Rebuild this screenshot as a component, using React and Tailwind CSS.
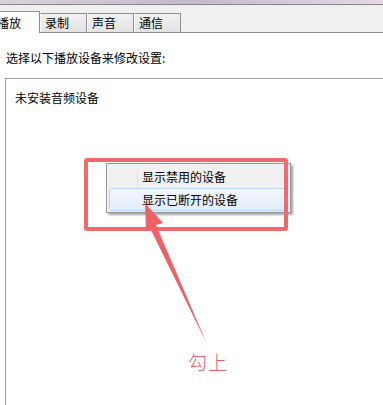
import React from 'react';

const tabs = ['录制', '声音', '通信'];

const menuItems = [
  { label: '显示禁用的设备', active: false },
  { label: '显示已断开的设备', active: true },
];

const App = () => {
  return (
    <div className="relative w-[383px] h-[405px] overflow-hidden bg-white text-[12px] text-black font-['Noto_Sans_CJK_SC','Noto_Sans',sans-serif] flex flex-col">
      {/* blurred window edge */}
      <div className="h-[4px] bg-gradient-to-r from-[#d8d2d9] via-[#c4bbca] to-[#e4d9e5]" />

      {/* tab strip */}
      <div className="h-[29px] bg-[#f0f0f0] border-t border-[#858585] border-b border-b-[#8e8f8f] flex items-end">
        <div className="h-[22px] w-[40px] -mb-px bg-white border-r border-t border-[#8e8f8f] flex items-center pl-[0px] overflow-hidden">
          <span className="-ml-[3px] whitespace-nowrap leading-none">播放</span>
        </div>
        {tabs.map((t) => (
          <div
            key={t}
            className="h-[19px] w-[47px] bg-gradient-to-b from-[#f2f2f2] to-[#e3e3e3] border-r border-t border-[#8e8f8f] border-l border-l-[#fcfcfc] flex items-center pl-[4px]"
          >
            <span className="leading-none">{t}</span>
          </div>
        ))}
      </div>

      {/* page */}
      <div className="pt-[19px] pl-[6px] leading-none">选择以下播放设备来修改设置:</div>

      <div className="mt-[14px] ml-[5px] flex-1 border-l border-t border-[#a0a0a0] pl-[9px] pt-[13px]">
        <div className="leading-none">未安装音频设备</div>
      </div>

      {/* context menu */}
      <div className="absolute left-[106px] top-[163px] w-[185px] h-[50px] bg-[#f0f0f0] border border-[#979797] shadow-[2px_2px_2px_rgba(0,0,0,0.35)] flex flex-col justify-center px-[2px]">
        <div className="absolute left-[30px] top-[2px] bottom-[2px] w-px bg-[#e2e3e3]" />
        {menuItems.map((item) => (
          <div
            key={item.label}
            className={
              item.active
                ? 'relative h-[23px] flex items-center pl-[32px] rounded-[3px] border border-[#b8d6fb] bg-gradient-to-b from-[#f2f6fc] to-[#e2ecfa]'
                : 'relative h-[23px] flex items-center pl-[32px] border border-transparent'
            }
          >
            <span className="leading-none">{item.label}</span>
          </div>
        ))}
      </div>

      {/* red annotation frame */}
      <div className="absolute left-[84px] top-[158px] w-[204px] h-[73px] border-[4px] border-[#ee6a6c] rounded-[3px]" />

      {/* arrow */}
      <svg className="absolute left-0 top-0 pointer-events-none" width="383" height="405" viewBox="0 0 383 405">
        <polygon
          points="145,203 163,223 156,225 207,344 150,228 146,230"
          fill="#ec6266"
        />
      </svg>

      <div className="absolute left-[188px] top-[352px] text-[19px] font-light leading-none text-[#e0606a] tracking-[1px]">
        勾上
      </div>
    </div>
  );
};

export default App;
